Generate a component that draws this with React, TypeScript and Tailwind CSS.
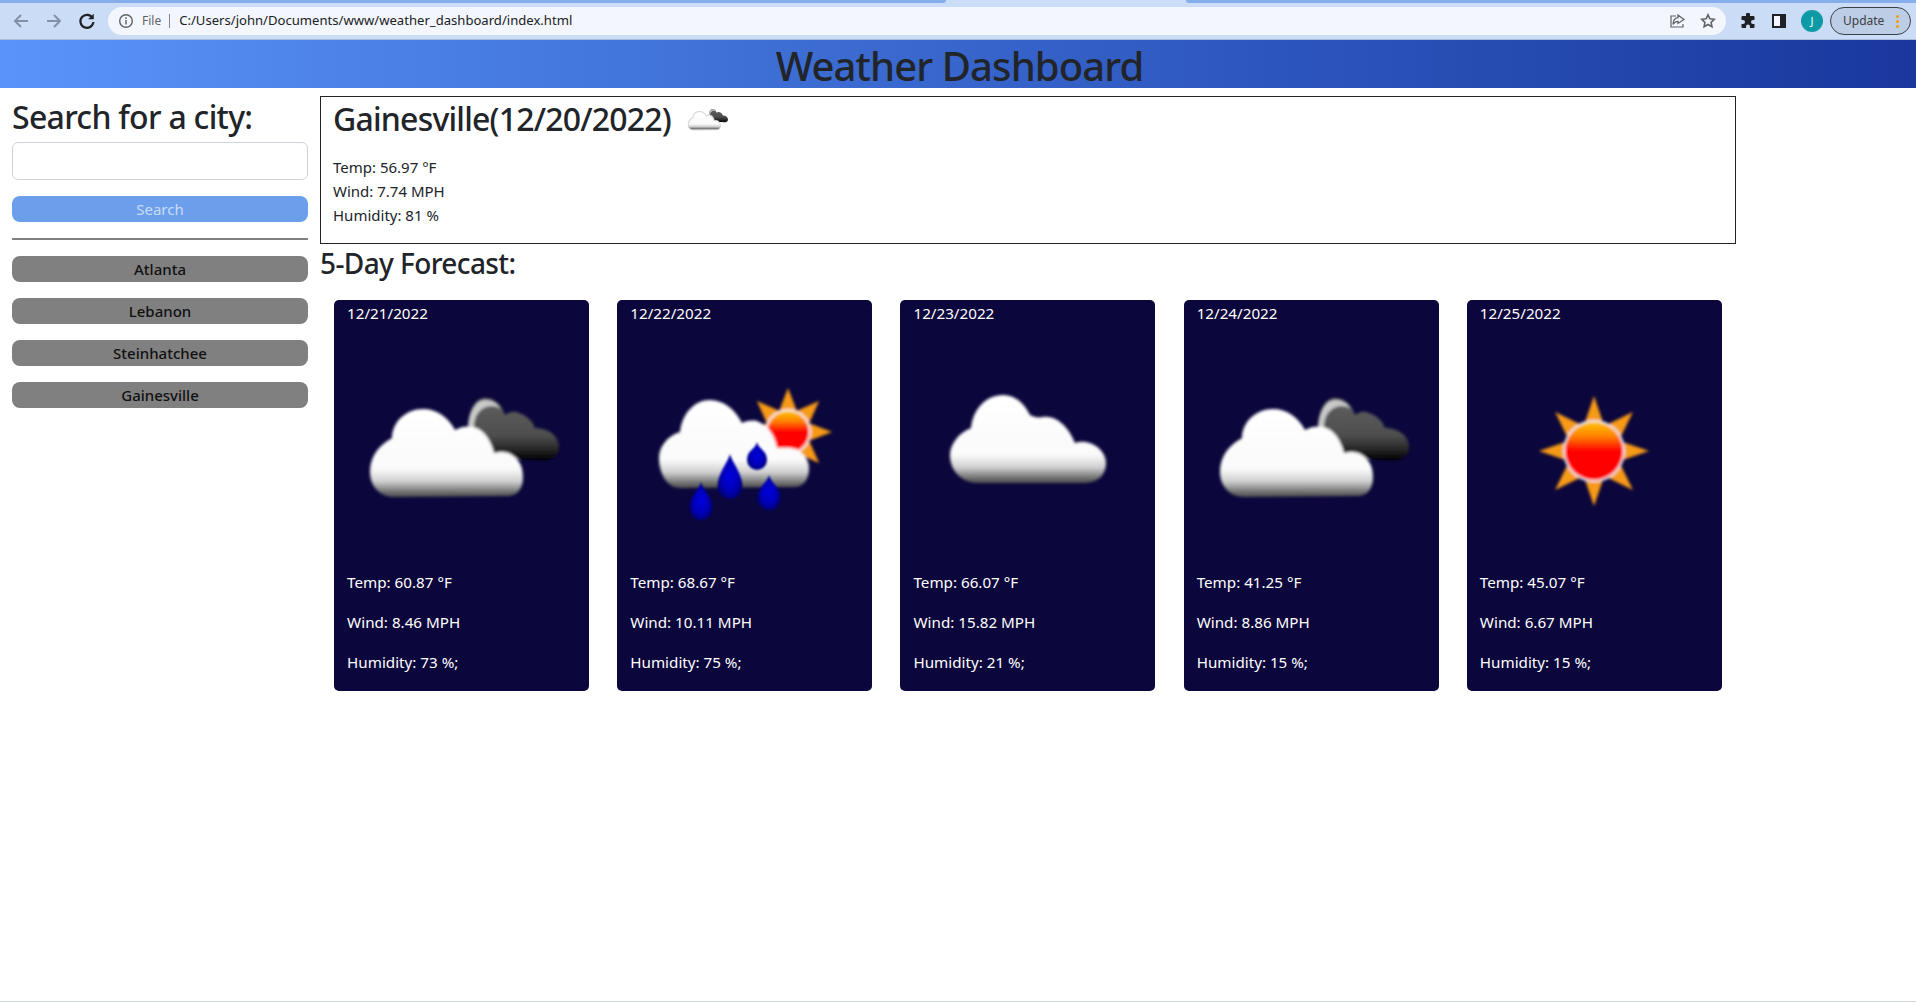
import * as React from 'react';

const FONT = "font-['Noto_Sans','Open_Sans',sans-serif]";

const WHITE_CLOUD =
  'M36 147C36 134 42 122 58 113C58 97 72 84 89 84C103 84 114 92 121 105C128 101 134 101 139 102C150 104 157 116 160 128C168 126 174 127 178 130C186 135 189 143 189 152C189 163 184 170 175 171L60 172C46 172 36 161 36 147Z';
const DARK_CLOUD =
  'M134 100C135 84 142 73 151 73C161 73 168 80 171 90C176 86 181 86 185 88C194 91 199 97 201 103C213 103 225 110 225 122C225 130 219 135 210 135L164 133Z';
const SINGLE_CLOUD =
  'M50 130C50 120 58 108 71 103C73 84 86 70 103 70C115 70 124 78 130 90C134 92 138 93 143 92C155 90 168 100 175 118C189 113 206 124 206 138C206 150 198 157 186 158L78 158C62 158 50 146 50 130Z';
const RAIN_CLOUD =
  'M42 133C42 122 50 111 63 107C65 88 78 75 93 75C106 75 118 84 125 98C132 95 138 95 142 97C152 101 158 112 160 123C168 123 174 122 181 125C188 130 192 136 192 143C192 155 186 162 177 162L63 163C50 163 42 148 42 133Z';

const SUN_RAYS = (cx: number, cy: number, outer: number, inner: number) => {
  const pts: string[] = [];
  for (let i = 0; i < 16; i++) {
    const r = i % 2 === 0 ? outer : inner;
    const a = (i * Math.PI) / 8;
    pts.push(`${(cx + r * Math.sin(a)).toFixed(1)},${(cy - r * Math.cos(a)).toFixed(1)}`);
  }
  return pts.join(' ');
};

const Defs = () => (
  <defs>
    <filter id="soft" x="-10%" y="-10%" width="120%" height="120%">
      <feGaussianBlur stdDeviation="1.5" />
    </filter>
    <filter id="softer" x="-30%" y="-30%" width="160%" height="160%">
      <feGaussianBlur stdDeviation="1.3" />
    </filter>
    <linearGradient id="whiteFill" x1="0" y1="0" x2="0" y2="1">
      <stop offset="0" stopColor="#ffffff" />
      <stop offset="0.68" stopColor="#fafafa" />
      <stop offset="0.82" stopColor="#d0d0d0" />
      <stop offset="0.95" stopColor="#6a6a6a" />
      <stop offset="1" stopColor="#505050" />
    </linearGradient>
    <linearGradient id="darkFill" x1="0" y1="0" x2="0" y2="1">
      <stop offset="0" stopColor="#5f5f5f" />
      <stop offset="0.6" stopColor="#4e4e4e" />
      <stop offset="0.85" stopColor="#222222" />
      <stop offset="1" stopColor="#000000" />
    </linearGradient>
    <linearGradient id="sunFill" x1="0" y1="0" x2="0" y2="1">
      <stop offset="0" stopColor="#ffc400" />
      <stop offset="0.25" stopColor="#ff8000" />
      <stop offset="0.5" stopColor="#ff0000" />
      <stop offset="1" stopColor="#ff0000" />
    </linearGradient>
    <radialGradient id="dropFill">
      <stop offset="0" stopColor="#0000e0" />
      <stop offset="0.7" stopColor="#0000b4" />
      <stop offset="1" stopColor="#00007c" />
    </radialGradient>
  </defs>
);

const BrokenClouds = ({
  viewBox = '0 0 255 246',
  className = 'w-[255px] h-[246px]',
  outline = false,
}: {
  viewBox?: string;
  className?: string;
  outline?: boolean;
}) => (
  <svg viewBox={viewBox} className={className}>
    <Defs />
    <g filter="url(#soft)">
      <path d={DARK_CLOUD} fill="url(#darkFill)" />
      <path d="M134 103C135 86 142 75 151 75C158 75 163 78 167 84C160 79 150 80 144 88C141 92 140 97 140 104" fill="#c9c9c9" />
      <path d={WHITE_CLOUD} fill="url(#whiteFill)" stroke={outline ? '#d4d4d4' : 'none'} strokeWidth={outline ? 5 : 0} />
    </g>
  </svg>
);

const ScatteredCloud = () => (
  <svg viewBox="0 0 255 246" className="w-[255px] h-[246px]">
    <Defs />
    <path d={SINGLE_CLOUD} fill="url(#whiteFill)" filter="url(#soft)" />
  </svg>
);

const Drop = ({ x, top, bottom, w }: { x: number; top: number; bottom: number; w: number }) => {
  const r = w / 2;
  const cy = bottom - r;
  return (
    <path
      d={`M${x} ${top}C${x + 2} ${top + 8} ${x + r} ${cy - r} ${x + r} ${cy}A${r} ${r} 0 0 1 ${x - r} ${cy}C${x - r} ${cy - r} ${x - 2} ${top + 8} ${x} ${top}Z`}
      fill="url(#dropFill)"
      filter="url(#softer)"
    />
  );
};

const RainSun = () => (
  <svg viewBox="0 0 255 246" className="w-[255px] h-[246px]">
    <Defs />
    <g filter="url(#soft)">
      <polygon points={SUN_RAYS(171, 107, 44, 23)} fill="#f79a13" />
      <circle cx="171" cy="107" r="23" fill="#f2f2f2" />
      <circle cx="171" cy="107" r="21" fill="url(#sunFill)" />
      <path d={RAIN_CLOUD} fill="url(#whiteFill)" />
    </g>
    <Drop x={113} top={129} bottom={174} w={25} />
    <Drop x={140} top={117} bottom={145} w={20} />
    <Drop x={84} top={157} bottom={195} w={23} />
    <Drop x={152} top={150} bottom={185} w={23} />
  </svg>
);

const Sun = () => (
  <svg viewBox="0 0 255 246" className="w-[255px] h-[246px]">
    <Defs />
    <g filter="url(#soft)">
      <polygon points={SUN_RAYS(127, 126, 55, 27)} fill="#f79a13" />
      <circle cx="127" cy="126" r="31" fill="#ececf2" />
      <circle cx="127" cy="126" r="29" fill="url(#sunFill)" />
    </g>
  </svg>
);

const forecast = [
  { date: '12/21/2022', icon: <BrokenClouds />, temp: '60.87', wind: '8.46', humidity: '73' },
  { date: '12/22/2022', icon: <RainSun />, temp: '68.67', wind: '10.11', humidity: '75' },
  { date: '12/23/2022', icon: <ScatteredCloud />, temp: '66.07', wind: '15.82', humidity: '21' },
  { date: '12/24/2022', icon: <BrokenClouds />, temp: '41.25', wind: '8.86', humidity: '15' },
  { date: '12/25/2022', icon: <Sun />, temp: '45.07', wind: '6.67', humidity: '15' },
];

const cities = ['Atlanta', 'Lebanon', 'Steinhatchee', 'Gainesville'];

const BrowserBar = () => (
  <div className="h-10 shrink-0 bg-[#cbdcf6] border-b border-b-[#a9bcd8] flex flex-col">
    <div className="h-[3px] flex shrink-0">
      <div className="w-[946px] bg-[#85aeea] rounded-br-[3px]" />
      <div className="w-[240px]" />
      <div className="flex-1 bg-[#85aeea] rounded-bl-[3px]" />
    </div>
    <div className="flex-1 flex items-center">
      <div className="w-[108px] shrink-0 flex items-center pl-[12px] gap-[15px]">
        <svg width="18" height="18" viewBox="0 0 18 18" fill="none" stroke="#8490a3" strokeWidth="2"><path d="M16 9H3M9 3L3 9l6 6" /></svg>
        <svg width="18" height="18" viewBox="0 0 18 18" fill="none" stroke="#8490a3" strokeWidth="2"><path d="M2 9h13M9 3l6 6-6 6" /></svg>
        <svg width="18" height="18" viewBox="0 0 18 18" fill="none" stroke="#202124" strokeWidth="2.2"><path d="M14.5 6A6.5 6.5 0 1 0 15.4 10" /><path d="M15.5 2v5h-5" fill="#202124" strokeWidth="0.5" /></svg>
      </div>
      <div className="w-[1618px] h-7 rounded-full bg-[#f3f7fd] flex items-center pl-[10px] pr-[10px]">
        <svg width="16" height="16" viewBox="0 0 16 16" fill="none" stroke="#5f6368" strokeWidth="1.4"><circle cx="8" cy="8" r="6.3" /><path d="M8 7v4.5M8 4.3v1.6" /></svg>
        <span className="ml-[8px] text-[12px] text-[#5f6368]">File</span>
        <span className="w-px h-[14px] bg-[#80868b] ml-[8px] mr-[9px]" />
        <span className="text-[13.1px] text-[#202124]">C:/Users/john/Documents/www/weather_dashboard/index.html</span>
        <svg className="ml-auto" width="18" height="18" viewBox="0 0 18 18" fill="none" stroke="#5f6368" strokeWidth="1.2"><path d="M8 4H3v11h12v-3" /><path d="M10 3l6 4.5-6 4V9.3C7.5 9.3 6 10.5 5 12.5 5 8.5 7 6 10 5.6Z" /></svg>
        <svg className="ml-[14px]" width="16" height="16" viewBox="0 0 16 16" fill="none" stroke="#5f6368" strokeWidth="1.6"><path d="M8 1.8l1.9 4 4.4.5-3.2 3 .9 4.4L8 11.5l-3.9 2.2.8-4.4-3.2-3 4.4-.5Z" /></svg>
      </div>
      <div className="flex items-center ml-[14px]">
        <svg width="16" height="16" viewBox="0 0 16 16" fill="#202124"><path d="M6 1.500a2 2 0 0 1 4 0V3h3.500a1 1 0 0 1 1 1v3H13a2 2 0 0 0 0 4h1.500v3a1 1 0 0 1-1 1H10v-1.500a2 2 0 0 0-4 0V15H2.500a1 1 0 0 1-1-1v-3H3a2 2 0 0 0 0-4H1.500V4a1 1 0 0 1 1-1H6Z" /></svg>
        <svg className="ml-[16px]" width="14" height="14" viewBox="0 0 14 14"><path d="M0 0h14v14H0Z" fill="#202124" /><path d="M2 2h6v10H2Z" fill="#f3f7fd" /></svg>
        <span className="ml-[15px] w-[22px] h-[22px] rounded-full bg-[#0d9aa5] text-white text-[11px] flex items-center justify-center">J</span>
        <div className="ml-[7px] w-[81px] h-[28px] rounded-full border border-[#3c4043] bg-[#bccde5] flex items-center pl-[12px] text-[12px] text-[#3c4043] relative">
          Update
          <span className="absolute right-[11px] top-[7px] flex flex-col gap-[2px]">
            <span className="w-[3px] h-[3px] rounded-full bg-[#f29900]" />
            <span className="w-[3px] h-[3px] rounded-full bg-[#f29900]" />
            <span className="w-[3px] h-[3px] rounded-full bg-[#f29900]" />
          </span>
        </div>
      </div>
    </div>
  </div>
);

const App = () => {
  return (
    <div className={`h-screen flex flex-col bg-white text-[#212529] overflow-hidden ${FONT}`}>
      <BrowserBar />
      <header className="h-12 shrink-0 bg-gradient-to-r from-[#5a94fa] to-[#1a379e] flex items-center justify-center">
        <h1 className="text-[40px] leading-[48px] font-medium tracking-[-0.9px] pt-[3px] pl-[3px]">Weather Dashboard</h1>
      </header>
      <div className="flex flex-1 pt-2 pl-3">
        <aside className="w-[296px] shrink-0">
          <h2 className="text-[32px] leading-[38px] font-medium tracking-[-0.7px] pt-[2px] mb-[6px]">Search for a city:</h2>
          <input type="text" className="w-full h-[38px] block rounded-md border border-[#ced4da] bg-white" />
          <button className="block w-full h-[26px] mt-4 rounded-lg bg-[#6b9eeb] text-[#ffffffa6] text-[15px] leading-[26px]">Search</button>
          <hr className="mt-4 mb-4 border-t-2 border-[#808080]" />
          <div className="flex flex-col gap-4">
            {cities.map((city) => (
              <button key={city} className="h-[26px] rounded-lg bg-[#808080] text-[15px] leading-[26px] font-medium text-[#111]">
                {city}
              </button>
            ))}
          </div>
        </aside>
        <main className="w-[1416px] ml-[12px]">
          <section className="h-[148px] border border-[#212529] px-3 pt-[2px]">
            <div className="flex items-center h-[40px]">
              <h2 className="text-[32px] leading-[38px] font-medium tracking-[-0.8px]">Gainesville(12/20/2022)</h2>
              <BrokenClouds viewBox="30 65 200 115" outline className="ml-[16px] w-[42px] h-[25px]" />
            </div>
            <div className="mt-[16px] text-[15px] leading-6">
              <p>Temp: 56.97 °F</p>
              <p>Wind: 7.74 MPH</p>
              <p>Humidity: 81 %</p>
            </div>
          </section>
          <h3 className="text-[28px] leading-[34px] font-medium mt-[2px] tracking-[-0.6px]">5-Day Forecast:</h3>
          <div className="flex justify-around mt-[20px]">
            {forecast.map((day) => (
              <div key={day.date} className="w-[255px] h-[391px] rounded-[5px] bg-[#0b063b] text-white text-[15.2px]">
                <div className="leading-6 px-[13px] pt-[1px]">{day.date}</div>
                {day.icon}
                <div className="px-[13px] leading-6 flex flex-col gap-4 -mt-px">
                  <p>Temp: {day.temp} °F</p>
                  <p>Wind: {day.wind} MPH</p>
                  <p>Humidity: {day.humidity} %;</p>
                </div>
              </div>
            ))}
          </div>
        </main>
      </div>
      <div className="h-px shrink-0 bg-[#cfd6dc]" />
    </div>
  );
};

export default App;
